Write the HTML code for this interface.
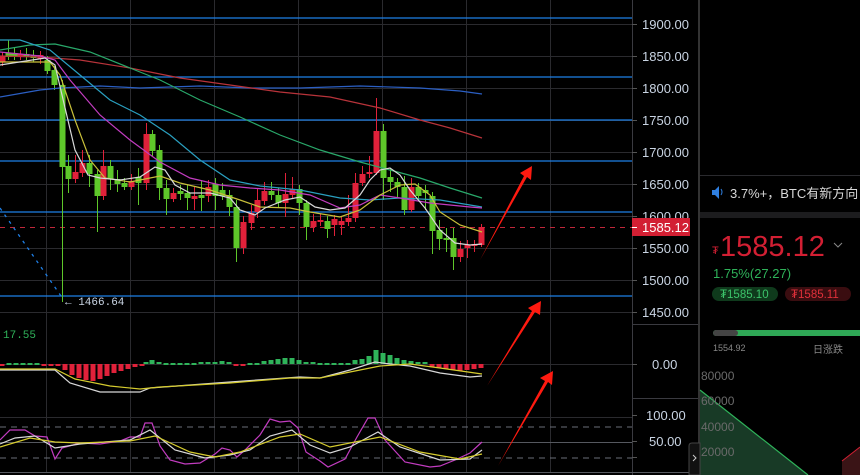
<!DOCTYPE html>
<html><head><meta charset="utf-8"><style>
html,body{margin:0;padding:0;background:#000;width:860px;height:475px;overflow:hidden}
svg{display:block}
.ax{font-family:"Liberation Sans",sans-serif;font-size:13px;fill:#c9d4e3}
</style></head><body>
<svg id="s" width="860" height="475" viewBox="0 0 860 475" xmlns="http://www.w3.org/2000/svg">
<rect width="860" height="475" fill="#000"/>
<g id="grid" stroke="#2a2a2e" stroke-width="1"></g>
<g stroke="#1e7fe6" stroke-width="1.3">
<line x1="0" y1="18" x2="632" y2="18"/><line x1="0" y1="77" x2="632" y2="77"/>
<line x1="0" y1="120" x2="632" y2="120"/><line x1="0" y1="161" x2="632" y2="161"/>
<line x1="0" y1="212" x2="632" y2="212"/><line x1="0" y1="296" x2="632" y2="296"/>
</g>
<line x1="0" y1="227.5" x2="632" y2="227.5" stroke="#c0283a" stroke-dasharray="5,5"/>
<line x1="0" y1="208" x2="61" y2="296" stroke="#1e7fe6" stroke-dasharray="3,5" stroke-width="1.3"/>
<g stroke="#6a6e78" stroke-dasharray="6,5"><line x1="0" y1="427" x2="632" y2="427"/><line x1="0" y1="458" x2="632" y2="458"/></g>
<line x1="0" y1="442.5" x2="632" y2="442.5" stroke="#55585f"/>
<g id="cand"></g>
<g fill="none" stroke-width="1.2">
<polyline stroke="#2b5fc4" points="0,97 40,90 60,88 100,86 140,88 200,86 250,88 300,88 360,86 420,88 460,91 482,94"/>
<polyline stroke="#b8333a" points="0,56 40,57 80,60 130,68 180,78 230,85 280,92 330,97 380,108 420,120 450,128 482,138"/>
<polyline stroke="#29a86a" points="0,50 30,45 55,44 90,52 130,68 160,80 200,100 240,117 280,135 320,150 360,162 390,170 420,178 450,188 482,198"/>
<polyline stroke="#2aa0c0" points="0,40 20,40 50,50 80,75 110,100 140,115 170,135 200,160 230,180 260,186 300,190 340,198 370,200 400,198 440,200 482,207"/>
<polyline stroke="#c23cc0" points="0,52 40,56 55,60 70,80 100,115 130,140 160,162 190,178 220,185 250,188 280,190 310,195 340,208 360,205 380,195 400,198 430,203 470,207 482,208"/>
<polyline stroke="#c9c03a" points="0,62 50,62 60,75 75,120 90,160 105,178 130,182 160,176 180,183 210,190 240,200 260,207 290,208 310,212 340,217 360,210 380,195 400,185 415,184 430,195 440,212 460,225 482,232"/>
<polyline stroke="#d8d8d8" points="0,65 45,58 55,65 62,95 75,150 88,175 100,178 120,180 140,177 155,167 165,170 175,185 190,193 210,193 230,198 240,210 255,215 265,208 285,200 300,197 315,207 330,210 345,208 360,195 370,180 380,170 390,168 400,175 410,190 425,208 440,230 455,243 470,245 482,244"/>
</g>
<g id="macd"></g>
<g fill="none" stroke-width="1.2">
<polyline stroke="#d8d8d8" points="0,370 55,370 70,383 100,392 140,392 150,388 230,382 300,377 320,378 350,370 375,362 390,364 410,366 440,373 470,377 482,376"/>
<polyline stroke="#d6cc2e" points="0,369 55,369 75,379 110,386 140,389 160,387 230,383 290,378 320,378 350,372 380,366 410,364 440,368 482,374"/>
<polyline stroke="#c23cc0" points="0,440 10,430 25,430 35,436 47,437 55,459 62,448 80,443 100,444 120,441 130,437 140,437 145,423 152,423 160,446 170,460 185,464 200,463 215,454 222,448 230,450 237,457 245,450 260,435 270,419 280,422 290,421 298,428 306,452 320,461 328,467 345,459 357,437 368,418 375,418 385,440 405,462 430,467 440,466 455,460 470,453 482,442"/>
<polyline stroke="#d8d8d8" points="0,444 15,438 35,436 55,448 80,444 130,440 150,430 175,450 205,458 230,455 250,450 270,436 292,430 310,445 330,453 350,447 378,432 400,447 440,460 470,459 482,450"/>
<polyline stroke="#d6cc2e" points="0,447 30,438 55,442 80,443 130,441 155,436 190,452 215,457 240,452 280,437 300,434 330,447 380,437 420,452 460,459 482,454"/>
</g>
<g fill="#ff1a10">
<polygon points="480,260 524,176 520,173 532,166 531,180 527,177"/>
<polygon points="487,386 532,311 528,308 541,301 540,315 535,312"/>
<polygon points="498,466 545,381 540,378 553,371 552,385 548,382"/>
</g>
<text x="3" y="338" font-family="Liberation Mono,monospace" font-size="11" fill="#2fb35a">17.55</text>
<text x="65" y="305" font-family="Liberation Mono,monospace" font-size="11" fill="#c9d4e3">← 1466.64</text>
<line x1="632.5" y1="0" x2="632.5" y2="475" stroke="#3a3a40"/>
<line x1="632" y1="324.5" x2="698" y2="324.5" stroke="#3a3a40"/>
<line x1="632" y1="398.5" x2="698" y2="398.5" stroke="#3a3a40"/>
<line x1="0" y1="472.5" x2="698" y2="472.5" stroke="#55585f"/>
<g id="ticks" stroke="#555"></g>
<g class="ax">
<text x="642" y="29">1900.00</text><text x="642" y="61">1850.00</text><text x="642" y="93">1800.00</text>
<text x="642" y="125">1750.00</text><text x="642" y="157">1700.00</text><text x="642" y="189">1650.00</text>
<text x="642" y="221">1600.00</text><text x="642" y="253">1550.00</text><text x="642" y="285">1500.00</text>
<text x="642" y="317">1450.00</text><text x="652" y="369">0.00</text><text x="646" y="420">100.00</text><text x="649" y="446">50.00</text>
</g>
<rect x="632" y="218" width="58" height="18" fill="#d21f33"/>
<line x1="632" y1="227.5" x2="637" y2="227.5" stroke="#fff"/>
<text x="642" y="232" class="ax" style="fill:#fff">1585.12</text>
<rect x="698" y="0" width="2" height="475" fill="#333"/>
<line x1="700" y1="175.5" x2="860" y2="175.5" stroke="#2a2a2e"/>
<path d="M712 190h3l4-4v13l-4-4h-3z" fill="#2f7fe0"/>
<path d="M721 189q2 3 0 6" stroke="#2f7fe0" fill="none"/>
<text x="730" y="198" font-family="Liberation Sans,'Noto Sans CJK SC',sans-serif" font-size="13" fill="#d8d8d8">3.7%+，BTC有新方向</text>
<rect x="700" y="212" width="160" height="6" fill="#1c1c1e"/>
<text x="712" y="254" font-family="Liberation Sans,sans-serif" font-size="11" fill="#d21f33">₮</text>
<text x="720" y="256" font-family="Liberation Sans,sans-serif" font-size="29" fill="#d21f33">1585.12</text>
<path d="M834 243l4 4 4-4" stroke="#888" fill="none"/>
<text x="713" y="278" font-family="Liberation Sans,sans-serif" font-size="13" fill="#2fb35a">1.75%(27.27)</text>
<rect x="712" y="287" width="66" height="14" rx="7" fill="#0f3a1c"/>
<text x="720" y="298" font-family="Liberation Sans,sans-serif" font-size="11.5" fill="#3cc46a">₮1585.10</text>
<rect x="785" y="287" width="66" height="14" rx="7" fill="#3a0d10"/>
<text x="791" y="298" font-family="Liberation Sans,sans-serif" font-size="11.5" fill="#e0303a">₮1585.11</text>
<rect x="713" y="330" width="150" height="6" rx="3" fill="#2fa856"/>
<rect x="713" y="330" width="25" height="6" rx="3" fill="#444"/>
<text x="713" y="351" font-family="Liberation Sans,sans-serif" font-size="9" fill="#888">1554.92</text>
<text x="813" y="353" font-family="Liberation Sans,'Noto Sans CJK SC',sans-serif" font-size="10" fill="#888">日涨跌</text>
<polygon points="700,390 808,475 700,475" fill="#183a26"/>
<line x1="700" y1="390" x2="808" y2="475" stroke="#2fb35a" stroke-width="1.2"/>
<polygon points="842,461 860,447 860,475 842,475" fill="#3a1416"/>
<polyline points="842,461 860,447" stroke="#d21f33" fill="none"/>
<g font-family="Liberation Sans,sans-serif" font-size="12" fill="#6a6a6a">
<text x="701" y="380">80000</text><text x="701" y="405">60000</text><text x="701" y="431">40000</text><text x="701" y="456">20000</text>
</g>
<path d="M700 443h-8q-3 0-3 3v29h11z" fill="#111" stroke="#444"/>
<path d="M693 455l3 3-3 3" stroke="#ccc" fill="none"/>
</svg>
<script>
var NS="http://www.w3.org/2000/svg";
function el(p,t,a){var e=document.createElementNS(NS,t);for(var k in a)e.setAttribute(k,a[k]);p.appendChild(e);return e;}
var g=document.getElementById('grid');
[46,130,214,298,382,466,550].forEach(function(x){el(g,'line',{x1:x+.5,y1:0,x2:x+.5,y2:472});});
[24,56,88,120,152,184,216,248,280,312,364,417].forEach(function(y){el(g,'line',{x1:0,y1:y+.5,x2:632,y2:y+.5});});
var tk=document.getElementById('ticks');
[24,56,88,120,152,184,216,248,280,312,364,415,441,457].forEach(function(y){el(tk,'line',{x1:632,y1:y+.5,x2:637,y2:y+.5});});
var C=[[2,56,62,'r',52,66],[8,53,57,'g',40,60],[14,53,56,'g',48,60],[20,54,57,'r',50,60],[26,54,57,'g',48,60],[33,55,58,'g',50,62],[40,55,59,'r',51,64],[47,60,71,'g',56,74],[54,70,85,'g',66,90],[62,85,167,'g',80,302],[68,166,179,'g',155,193],[75,172,179,'r',155,183],[82,163,173,'r',150,177],[89,163,174,'g',155,187],[97,174,196,'g',170,232],[103,166,196,'r',150,200],[110,166,179,'g',160,190],[117,179,184,'g',170,192],[124,183,187,'g',178,190],[131,181,187,'r',174,190],[138,177,183,'g',168,205],[146,134,183,'r',123,190],[152,134,151,'g',130,156],[159,150,188,'g',145,200],[166,188,199,'g',180,215],[173,193,199,'r',188,202],[180,191,194,'g',185,200],[187,193,198,'g',185,210],[194,196,199,'r',186,210],[201,195,198,'g',180,211],[208,187,196,'r',180,202],[215,184,196,'g',178,210],[222,190,196,'g',183,200],[229,195,207,'g',190,216],[236,207,248,'g',200,262],[243,222,248,'r',216,254],[251,213,223,'r',205,230],[257,200,212,'r',188,218],[264,191,201,'r',182,205],[271,191,195,'g',182,200],[278,195,203,'g',188,208],[285,194,203,'r',173,217],[292,189,195,'r',177,198],[299,189,203,'g',185,215],[306,203,227,'g',200,240],[313,221,227,'r',214,232],[320,220,222,'r',214,226],[327,221,229,'g',216,238],[334,219,225,'r',215,236],[341,221,225,'r',217,235],[348,218,222,'r',195,226],[355,183,218,'r',173,222],[362,174,183,'r',166,186],[369,172,174,'r',156,178],[376,131,173,'r',98,175],[383,131,178,'g',124,200],[390,177,182,'g',168,192],[397,182,187,'g',178,197],[404,187,210,'g',176,215],[411,187,210,'r',178,212],[418,187,196,'g',183,200],[425,190,193,'g',185,210],[432,196,231,'g',192,254],[439,230,239,'g',220,250],[446,238,240,'g',228,252],[453,238,257,'g',228,270],[460,249,257,'r',241,262],[467,245,248,'r',240,258],[474,244,246,'r',240,252],[481,227,245,'r',224,247]];
var cg=document.getElementById('cand');
C.forEach(function(c){var col=c[3]=='r'?'#e0213a':'#5ec72a';
el(cg,'line',{x1:c[0]+.5,y1:c[4],x2:c[0]+.5,y2:c[5],stroke:col,'stroke-width':1});
el(cg,'rect',{x:c[0]-2.5,y:c[1],width:6,height:Math.max(2,c[2]-c[1]),fill:col});});
var mg=document.getElementById('macd');
var M=[[2,-1],[9,1],[16,1],[23,1],[30,1],[37,1],[44,-1],[51,-1],[58,-2],[65,-6],[72,-11],[79,-14],[86,-16],[93,-17],[100,-15],[107,-12],[114,-9],[121,-7],[128,-5],[135,-3],[142,-1],[146,2],[152,4],[159,2],[166,1],[173,1],[180,1],[187,1],[194,1],[201,2],[208,2],[215,2],[222,3],[229,2],[236,-1],[243,-1],[250,1],[257,1],[264,3],[271,4],[278,5],[285,6],[292,6],[299,4],[306,2],[313,2],[320,1],[327,1],[334,1],[341,1],[348,1],[355,4],[362,5],[369,8],[376,14],[383,11],[390,9],[397,6],[404,4],[411,3],[418,2],[425,2],[432,-3],[439,-4],[446,-5],[453,-6],[460,-7],[467,-6],[474,-5],[481,-4]];
M.forEach(function(m){var v=m[1];var col=v<0?'#e0213a':'#2fb35a';
var y=v<0?364:364-v,h=Math.max(2,Math.abs(v));
el(mg,'rect',{x:m[0]-2.5,y:y,width:5,height:h,fill:col});});
</script>
</body></html>
